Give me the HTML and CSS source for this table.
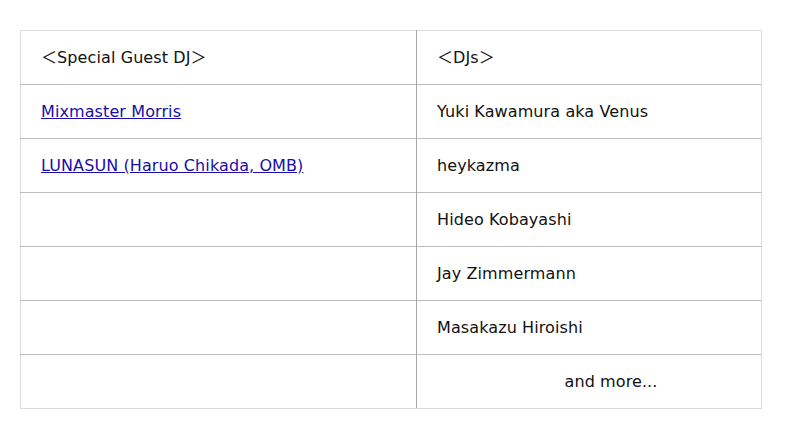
FILE: index.html
```html
<!DOCTYPE html>
<html>
<head>
<meta charset="utf-8">
<link rel="stylesheet" href="styles.css">
</head>
<body>
<div class="wrap">
<table class="lineup">
  <tr class="head"><td class="col-a">＜Special Guest DJ＞</td><td class="col-b">＜DJs＞</td></tr>
  <tr><td class="col-a"><a href="#">Mixmaster Morris</a></td><td class="col-b">Yuki Kawamura aka Venus</td></tr>
  <tr><td class="col-a"><a href="#">LUNASUN (Haruo Chikada, OMB)</a></td><td class="col-b">heykazma</td></tr>
  <tr><td class="col-a"></td><td class="col-b">Hideo Kobayashi</td></tr>
  <tr><td class="col-a"></td><td class="col-b">Jay Zimmermann</td></tr>
  <tr><td class="col-a"></td><td class="col-b">Masakazu Hiroishi</td></tr>
  <tr><td class="col-a"></td><td class="col-b more">and more...</td></tr>
</table>
</div>
</body>
</html>
```
FILE: styles.css
```css
html, body {
  margin: 0;
  padding: 0;
  background: #fff;
}
.wrap {
  padding: 30px 20px;
}
.lineup {
  border-collapse: collapse;
  width: 742px;
  font-family: "DejaVu Sans", "Noto Sans CJK JP", sans-serif;
  font-size: 16px;
  letter-spacing: 0.1px;
  color: #111;
  border: 1px solid #dcdcdc;
}
.lineup td {
  height: 54px;
  padding: 0 20px;
  border-top: 1px solid #bdbdbd;
  vertical-align: middle;
  box-sizing: border-box;
}
.lineup .head td {
  border-top: 1px solid #dcdcdc;
  padding-bottom: 4px;
}
.col-a {
  width: 396px;
  border-right: 1px solid #a8a8a8;
}
.col-b {
  border-right: 1px solid #dcdcdc;
}
.lineup tr:last-child td {
  border-bottom: 1px solid #dcdcdc;
}
.lineup .more {
  text-align: center;
  padding-left: 64px;
}
a {
  color: #1a0dab;
  text-decoration: underline;
}
```
